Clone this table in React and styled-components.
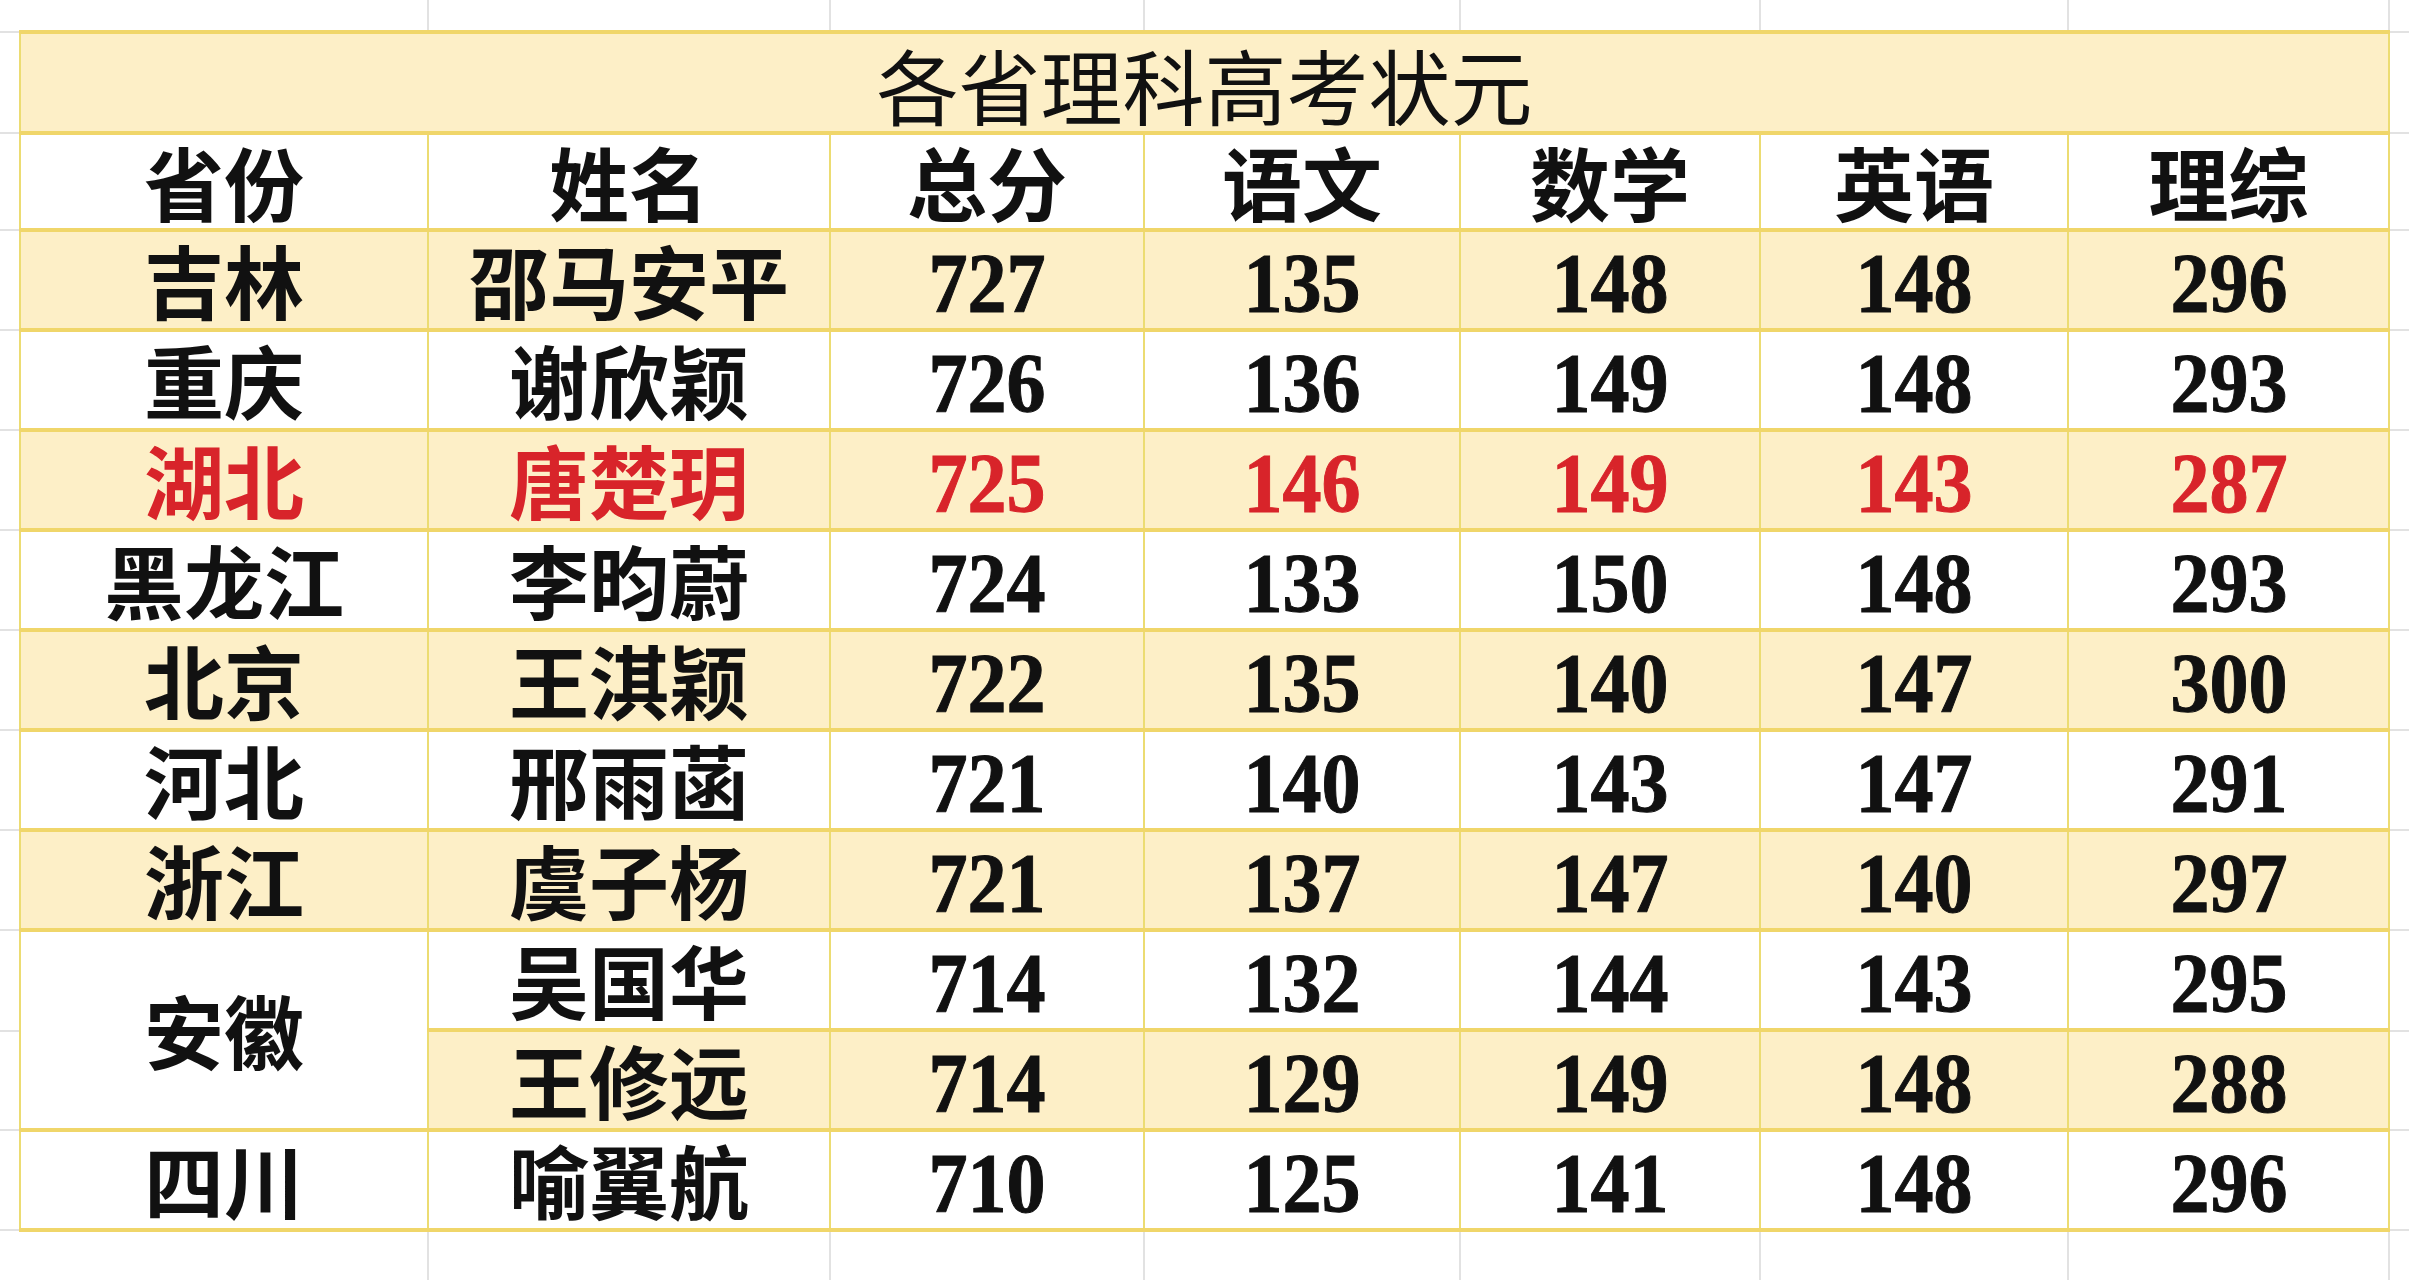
import React from 'react';
import styled, { createGlobalStyle } from 'styled-components';

const COLS = [408, 402, 314, 316, 300, 308, 321];
const VLINES = [428, 830, 1144, 1460, 1760, 2068, 2389];
const HLINES = [32, 133, 230, 330, 430, 530, 630, 730, 830, 930, 1031, 1130, 1230];

const GRID = '#e2e2e2';
const gridBg = [
  ...VLINES.map(
    (x) =>
      `linear-gradient(to right, transparent ${x - 1}px, ${GRID} ${x - 1}px, ${GRID} ${x + 1}px, transparent ${x + 1}px)`
  ),
  ...HLINES.map(
    (y) =>
      `linear-gradient(to bottom, transparent ${y - 1}px, ${GRID} ${y - 1}px, ${GRID} ${y + 1}px, transparent ${y + 1}px)`
  ),
].join(', ');

const GlobalStyle = createGlobalStyle`
  html, body {
    margin: 0;
    padding: 0;
    background: #ffffff;
  }
`;

const Sheet = styled.div`
  width: 2409px;
  height: 1280px;
  box-sizing: border-box;
  padding: 30px 0 0 19px;
  background-color: #ffffff;
  background-image: ${gridBg};
  overflow: hidden;
`;

const Table = styled.table`
  border-collapse: collapse;
  table-layout: fixed;
  width: 2370px;
`;

const Row = styled.tr`
  height: ${(p) => p.$h}px;
`;

const Cell = styled.td`
  padding: 0;
  text-align: center;
  vertical-align: middle;
  background: ${(p) => (p.$fill === 'yellow' ? '#fdefc7' : '#ffffff')};
  border-top: 4px solid #f0d66a;
  border-bottom: 4px solid #f0d66a;
  border-left: 2px solid #ecdc72;
  border-right: 2px solid #ecdc72;
  color: ${(p) => (p.$red ? '#d8242a' : '#111111')};
  white-space: nowrap;
  overflow: visible;
`;

const TitleText = styled.span`
  font-family: 'Noto Sans CJK SC', 'Noto Sans', sans-serif;
  font-weight: 400;
  font-size: 82px;
  line-height: 1;
  display: inline-block;
  transform: translateY(1px);
`;

const CjkText = styled.span`
  font-family: 'Noto Sans CJK SC', 'Noto Sans', sans-serif;
  font-weight: 700;
  font-size: 80px;
  line-height: 1;
  display: inline-block;
  transform: translateY(-2px);
`;

const NumText = styled.span`
  font-family: 'Liberation Serif', 'Times New Roman', serif;
  font-weight: 700;
  font-size: 84px;
  line-height: 1;
  display: inline-block;
  -webkit-text-stroke: 1px currentColor;
  transform: translateY(4px) scaleX(0.93);
`;

const HEAD = ['省份', '姓名', '总分', '语文', '数学', '英语', '理综'];

const ROWS = [
  { p: '吉林', n: '邵马安平', s: [727, 135, 148, 148, 296] },
  { p: '重庆', n: '谢欣颖', s: [726, 136, 149, 148, 293] },
  { p: '湖北', n: '唐楚玥', s: [725, 146, 149, 143, 287], red: true },
  { p: '黑龙江', n: '李昀蔚', s: [724, 133, 150, 148, 293] },
  { p: '北京', n: '王淇颖', s: [722, 135, 140, 147, 300] },
  { p: '河北', n: '邢雨菡', s: [721, 140, 143, 147, 291] },
  { p: '浙江', n: '虞子杨', s: [721, 137, 147, 140, 297] },
  { p: '安徽', n: '吴国华', s: [714, 132, 144, 143, 295], span: 2 },
  { p: null, n: '王修远', s: [714, 129, 149, 148, 288] },
  { p: '四川', n: '喻翼航', s: [710, 125, 141, 148, 296] },
];

export default function App() {
  return (
    <>
      <GlobalStyle />
      <Sheet>
        <Table>
          <colgroup>
            {COLS.map((w, i) => (
              <col key={i} style={{ width: w }} />
            ))}
          </colgroup>
          <tbody>
            <Row $h={101}>
              <Cell colSpan={7} $fill="yellow">
                <TitleText>各省理科高考状元</TitleText>
              </Cell>
            </Row>
            <Row $h={97}>
              {HEAD.map((h) => (
                <Cell key={h} $fill="white">
                  <CjkText>{h}</CjkText>
                </Cell>
              ))}
            </Row>
            {ROWS.map((r, i) => {
              const fill = i % 2 === 0 ? 'yellow' : 'white';
              return (
                <Row key={i} $h={100}>
                  {r.p !== null && (
                    <Cell
                      $fill={r.span ? 'white' : fill}
                      $red={r.red}
                      rowSpan={r.span || 1}
                    >
                      <CjkText>{r.p}</CjkText>
                    </Cell>
                  )}
                  <Cell $fill={fill} $red={r.red}>
                    <CjkText>{r.n}</CjkText>
                  </Cell>
                  {r.s.map((v, j) => (
                    <Cell key={j} $fill={fill} $red={r.red}>
                      <NumText>{v}</NumText>
                    </Cell>
                  ))}
                </Row>
              );
            })}
          </tbody>
        </Table>
      </Sheet>
    </>
  );
}
